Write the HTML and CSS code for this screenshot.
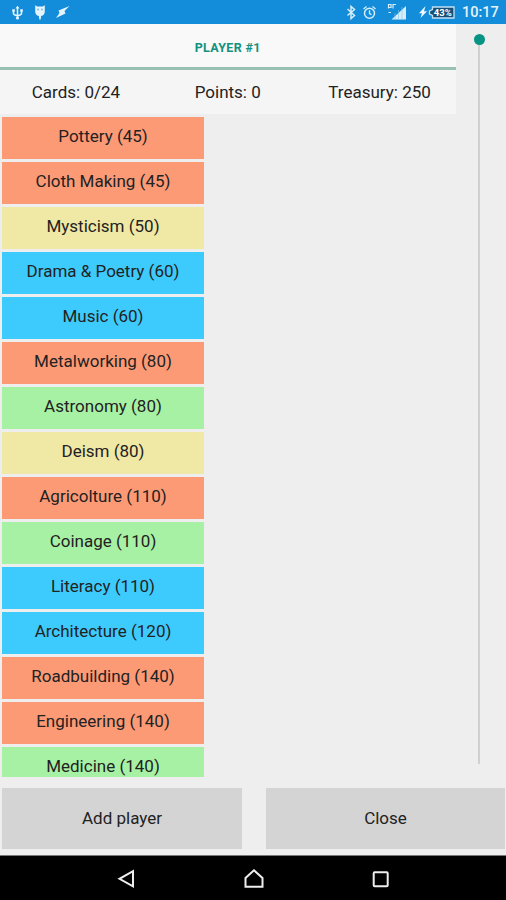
FILE: index.html
```
<!DOCTYPE html>
<html lang="en">
<head>
    <meta charset="UTF-8">
    <meta name="viewport" content="width=device-width, initial-scale=1.0">
    <title>Players</title>
    <link rel="stylesheet" href="styles.css">
</head>
<body>

<header class="status-bar">
    <svg width="64" height="23" viewBox="0 0 64 23" fill="none" stroke="#e4f3fc" stroke-width="1.5">
        <!-- usb -->
        <path d="M9.500 7v12M5.500 10v3.500q0 1.500 4 2.300M13.500 10v3.500q0 1.500-4 2.300"/>
        <path d="M7.500 8.500L9.500 5.700l2 2.800zM4.300 9.300h2.500v2.500H4.300zM12.300 9.300h2.500v2.500h-2.500z" fill="#e4f3fc" stroke="none"/>
        <circle cx="9.500" cy="18" r="1.600" fill="#e4f3fc" stroke="none"/>
        <!-- debug -->
        <path d="M27.200 5.300l2 1.300h5.600l2-1.300v6q0 4-3.700 4.700l-.4 3.500h-1.400l-.4-3.500q-3.700-.7-3.700-4.700z" fill="#e4f3fc" stroke="none"/>
        <path d="M29.300 9.500h1.500M33.200 9.500h1.500" stroke="#58afe2"/>
        <!-- fast charge -->
        <path d="M61.500 6L50.500 10.500l1 2.500L48 18l9.500-4.500-1-2.500z" fill="#e4f3fc" stroke="none"/>
    </svg>
    <div class="status-right">
        <svg width="78" height="23" viewBox="0 0 78 23" fill="none" stroke="#d7edfa" stroke-width="1.5">
            <path d="M6.500 9l7 6.500-3.500 3V6.500l3.500 3-7 6"/>
            <circle cx="28.500" cy="13.300" r="5"/>
            <path d="M28.500 10.300v3.300l2 1M22.500 9l3-2.500M34.500 9l-3-2.500" stroke-width="1.300"/>
            <path d="M65 6v13.500H50.500z" fill="#d7edfa" stroke="none"/>
            <path d="M54 13v7M57.500 10v10M61 7v13" stroke="#86c5eb" stroke-width=".6"/>
            <path d="M47.500 8.500V4.500H50v3h-2.500M52 8.500v-4h3M47.500 12.500h2.500" stroke-width="1.200"/>
        </svg>
        <svg width="36" height="23" viewBox="0 0 36 23">
            <path d="M6.500 6L0 13.200h3L1.500 18 8 11.200H5z" fill="#eff9ff"/>
            <path d="M13.500 7H35v11H13.500v-2.500L10.500 14v-3l3-1.500z" fill="#174f78" stroke="#c2e1f3" stroke-width="1.300"/>
            <text class="battery-level" x="23.800" y="16.300" text-anchor="middle">43%</text>
        </svg>
        <span class="clock">10:17</span>
    </div>
</header>

<main class="content">
    <section class="player">
        <div class="tab">PLAYER #1</div>
        <div class="stats">
            <span>Cards: 0/24</span>
            <span>Points: 0</span>
            <span>Treasury: 250</span>
        </div>
        <ul class="card-list">
            <li class="card orange">Pottery (45)</li>
            <li class="card orange">Cloth Making (45)</li>
            <li class="card yellow">Mysticism (50)</li>
            <li class="card blue">Drama &amp; Poetry (60)</li>
            <li class="card blue">Music (60)</li>
            <li class="card orange">Metalworking (80)</li>
            <li class="card green">Astronomy (80)</li>
            <li class="card yellow">Deism (80)</li>
            <li class="card orange">Agricolture (110)</li>
            <li class="card green">Coinage (110)</li>
            <li class="card blue">Literacy (110)</li>
            <li class="card blue">Architecture (120)</li>
            <li class="card orange">Roadbuilding (140)</li>
            <li class="card orange">Engineering (140)</li>
            <li class="card green">Medicine (140)</li>
        </ul>
    </section>
    <aside class="slider">
        <div class="thumb"></div>
        <div class="track"></div>
    </aside>
</main>

<div class="actions">
    <button>Add player</button>
    <button>Close</button>
</div>

<nav class="nav-bar">
    <svg width="20" height="20" viewBox="0 0 20 20"><path d="M16 2.200v15.200L2.500 9.800z"/></svg>
    <svg width="20" height="20" viewBox="0 0 20 20"><path d="M1.500 17.800V9L10 1.300 18.500 9v8.800z"/></svg>
    <svg width="20" height="20" viewBox="0 0 20 20"><rect x="2.700" y="3.200" width="14" height="14" rx="1"/></svg>
</nav>

</body>
</html>
```
FILE: styles.css
```
body {
    margin: 0;
    height: 900px;
    display: flex;
    flex-direction: column;
    overflow: hidden;
    background-color: #eee;
    color: #222;
    font-family: Roboto, sans-serif;
    font-size: 17px;
}

.status-bar {
    height: 23.5px;
    flex: none;
    display: flex;
    justify-content: space-between;
    background-color: #138dd9;
    padding: 0 7px 0 8px;
}

.status-bar svg {
    display: block;
}

.status-right {
    display: flex;
}

.battery-level {
    font-size: 9.5px;
    font-weight: bold;
    fill: #fff;
}

.clock {
    width: 37px;
    margin-left: 7px;
    line-height: 25px;
    font-size: 14.5px;
    font-weight: 500;
    color: #e4f3fc;
    white-space: nowrap;
}

.content {
    height: 753.5px;
    flex: none;
    display: flex;
}

.player {
    width: 455.5px;
    display: flex;
    flex-direction: column;
}

.tab {
    height: 43.5px;
    flex: none;
    border-bottom: 3px solid #98c1b3;
    background-color: #f9f9f9;
    color: #14917f;
    font-size: 12.5px;
    font-weight: bold;
    letter-spacing: 0.35px;
    line-height: 47px;
    text-align: center;
}

.stats {
    height: 43.5px;
    flex: none;
    display: grid;
    grid-template-columns: repeat(3, 1fr);
    background-color: #f5f5f5;
    line-height: 44px;
    text-align: center;
}

.card-list {
    list-style: none;
    margin: 0;
    padding: 3px 0 0 2px;
    overflow: hidden;
}

.card {
    width: 202px;
    height: 42px;
    margin-bottom: 3px;
    line-height: 39px;
    text-align: center;
}

.orange {
    background-color: #fd9a76;
}

.yellow {
    background-color: #f0e8a5;
}

.blue {
    background-color: #3dcbfe;
}

.green {
    background-color: #a7f1a4;
}

.slider {
    flex: 1;
    display: flex;
    flex-direction: column;
    align-items: center;
    padding: 10px 3px 13px 0;
}

.thumb {
    width: 11px;
    height: 11px;
    border-radius: 50%;
    background-color: #079484;
}

.track {
    width: 2px;
    flex: 1;
    background-color: #d0d0d0;
}

.actions {
    display: grid;
    grid-template-columns: 240px 239px;
    gap: 24px;
    padding: 11px 1px 6px 2px;
}

button {
    height: 61px;
    padding: 0 0 2px;
    border: none;
    background-color: #d4d4d4;
    color: #222;
    font: inherit;
}

.nav-bar {
    flex: 1;
    display: flex;
    justify-content: center;
    align-items: center;
    gap: 107px;
    padding: 2px 0 0 2px;
    border-top: 1px solid #777;
    background-color: #000;
}

.nav-bar svg {
    fill: none;
    stroke: #eee;
    stroke-width: 2;
}
```
